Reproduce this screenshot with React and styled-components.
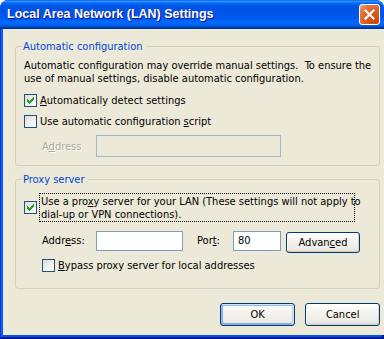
import React from "react";
import styled, { createGlobalStyle } from "styled-components";

const GlobalStyle = createGlobalStyle`
  html, body { margin: 0; padding: 0; background: #ffffff; }
  body {
    font-family: "DejaVu Sans Condensed", "Liberation Sans", sans-serif;
    font-size: 11px;
    color: #000;
  }
  * { box-sizing: border-box; }
`;

const Window = styled.div`
  width: 384px;
  height: 339px;
  display: flex;
  flex-direction: column;
  background: #0831d9;
  border-radius: 8px 8px 0 0;
  overflow: hidden;
`;

const TitleBar = styled.div`
  height: 29px;
  flex: none;
  display: flex;
  align-items: center;
  padding: 0 4px 1px 7px;
  border-radius: 8px 8px 0 0;
  background: linear-gradient(
    to bottom,
    #0058ee 0%,
    #3593ff 4%,
    #288eff 6%,
    #127dff 8%,
    #036ffc 10%,
    #0262ee 14%,
    #0057e5 20%,
    #0054e3 24%,
    #0055eb 56%,
    #005bf5 66%,
    #026afe 76%,
    #0062ef 86%,
    #0052d6 92%,
    #0040ab 94%,
    #003092 100%
  );
`;

const Title = styled.div`
  flex: 1;
  color: #fff;
  font-family: "Liberation Sans", sans-serif;
  font-weight: bold;
  font-size: 12.5px;
  text-shadow: 1px 1px #0f1089;
`;

const CloseButton = styled.div`
  width: 21px;
  height: 21px;
  border: 1px solid #fff;
  border-radius: 3px;
  display: flex;
  align-items: center;
  justify-content: center;
  background: radial-gradient(
    circle at 85% 85%,
    #cc4600 0%,
    #dc6527 55%,
    #e0764a 75%,
    #f4a98a 100%
  );
`;

const Frame = styled.div`
  flex: 1;
  display: flex;
  padding: 0 4px 4px 3px;
  background: #0055ea;
  box-shadow: inset 1px 0 #0831d9, inset -1px 0 #00138c, inset 0 -1px #00138c,
    inset -2px -2px #001ea0, inset 2px 0 #166aee;
`;

const Body = styled.div`
  flex: 1;
  background: #ece9d8;
  padding: 17px 9px 9px 12px;
  display: flex;
  flex-direction: column;
`;

const Group = styled.div`
  position: relative;
  border: 1px solid #d0d0bf;
  border-radius: 3px;
  display: flex;
  flex-direction: column;
  align-items: flex-start;
  padding: ${(p) => p.$pad};
  margin-top: ${(p) => p.$mt || 0}px;
`;

const Legend = styled.span`
  position: absolute;
  top: -7px;
  left: 6px;
  padding: 0 3px 0 1px;
  line-height: 13px;
  background: #ece9d8;
  color: #0046d5;
`;

const Para = styled.p`
  margin: 0 0 9px 0;
  line-height: 13px;
  white-space: pre;
`;

const CheckRow = styled.div`
  display: flex;
  align-items: center;
  gap: ${(p) => p.$gap ?? 3}px;
  line-height: 13px;
  margin-top: ${(p) => p.$mt || 0}px;
  padding-left: ${(p) => p.$indent || 0}px;
`;

const Box = styled.span`
  width: 13px;
  height: 13px;
  flex: none;
  border: 1px solid #1c5180;
  background: linear-gradient(135deg, #dcdcd7 0%, #f6f6f3 70%, #ffffff 100%);
  display: flex;
  align-items: center;
  justify-content: center;
`;

const U = styled.span`
  text-decoration: underline;
  text-underline-offset: 1px;
`;

const FieldRow = styled.div`
  display: flex;
  align-items: ${(p) => p.$align || "center"};
  padding-left: 18px;
  margin-top: ${(p) => p.$mt || 0}px;
`;

const FieldLabel = styled.span`
  width: ${(p) => p.$w}px;
  flex: none;
  line-height: ${(p) => p.$lh || 13}px;
  margin-left: ${(p) => p.$ml || 0}px;
  color: ${(p) => (p.$disabled ? "#aca899" : "#000")};
  text-shadow: ${(p) => (p.$disabled ? "1px 1px #ffffff" : "none")};
`;

const Input = styled.div`
  width: ${(p) => p.$w}px;
  height: ${(p) => p.$h}px;
  flex: none;
  border: 1px solid ${(p) => (p.$disabled ? "#a5b7c8" : "#7f9db9")};
  background: ${(p) => (p.$disabled ? "#ece9d8" : "#ffffff")};
  padding: 0 0 0 4px;
  line-height: ${(p) => p.$h - 2}px;
`;

const FocusLabel = styled.span`
  width: 316px;
  flex: none;
  border: 1px dotted #000;
  padding: 1px 1px 0 1px;
  line-height: 13px;
  white-space: pre;
`;

const Button = styled.div`
  width: ${(p) => p.$w || 75}px;
  height: ${(p) => p.$h || 23}px;
  flex: none;
  margin-left: ${(p) => p.$ml || 0}px;
  margin-top: ${(p) => p.$mt || 0}px;
  border: 1px solid #003c74;
  border-radius: 3px;
  display: flex;
  align-items: center;
  justify-content: center;
  background: linear-gradient(180deg, #ffffff 0%, #f4f3ee 40%, #ecebe6 86%, #d6d0c5 100%);
  box-shadow: ${(p) =>
    p.$default
      ? "inset -1px 1px #cee7ff, inset 1px 2px #98b8ea, inset -2px 2px #bcd4f6, inset 1px -1px #89ade4, inset 2px -2px #89ade4"
      : "inset -1px -1px #d6d0c5, inset 1px 1px #ffffff"};
`;

const Footer = styled.div`
  display: flex;
  justify-content: flex-end;
  gap: 10px;
  margin-top: 14px;
`;

const Check = () => (
  <svg width="7" height="7" viewBox="0 0 7 7" shapeRendering="crispEdges">
    <path
      fill="#21a121"
      d="M6 0h1v1h-1zM5 1h2v1h-2zM0 2h1v1h-1zM4 2h3v1h-3zM0 3h2v1h-2zM3 3h3v1h-3zM0 4h5v1h-5zM1 5h3v1h-3zM2 6h1v1h-1z"
    />
  </svg>
);

const Checkbox = ({ checked }) => <Box>{checked && <Check />}</Box>;

const CloseIcon = () => (
  <svg width="11" height="11" viewBox="0 0 11 11">
    <path d="M1.5 1.5 L9.5 9.5 M9.5 1.5 L1.5 9.5" stroke="#fff" strokeWidth="2.2" strokeLinecap="square" />
  </svg>
);

export default function App() {
  return (
    <>
      <GlobalStyle />
      <Window>
        <TitleBar>
          <Title>Local Area Network (LAN) Settings</Title>
          <CloseButton>
            <CloseIcon />
          </CloseButton>
        </TitleBar>
        <Frame>
          <Body>
            <Group $pad="12px 8px 8px 8px">
              <Legend>Automatic configuration</Legend>
              <Para>
                {"Automatic configuration may override manual settings.  To ensure the\nuse of manual settings, disable automatic configuration."}
              </Para>
              <CheckRow>
                <Checkbox checked />
                <span>
                  <U>A</U>utomatically detect settings
                </span>
              </CheckRow>
              <CheckRow $mt={8}>
                <Checkbox />
                <span>
                  Use automatic configuration <U>s</U>cript
                </span>
              </CheckRow>
              <FieldRow $mt={7}>
                <FieldLabel $w={54} $disabled>
                  A<U>d</U>dress
                </FieldLabel>
                <Input $w={185} $h={22} $disabled />
              </FieldRow>
            </Group>
            <Group $pad="13px 8px 16px 8px" $mt={13}>
              <Legend>Proxy server</Legend>
              <CheckRow $gap={2}>
                <Checkbox checked />
                <FocusLabel>
                  Use a pro<U>x</U>y server for your LAN (These settings will not apply to
                  {"\n"}dial-up or VPN connections).
                </FocusLabel>
              </CheckRow>
              <FieldRow $mt={9} $align="flex-start">
                <FieldLabel $w={54} $lh={20}>
                  Addr<U>e</U>ss:
                </FieldLabel>
                <Input $w={87} $h={20} />
                <FieldLabel $w={36} $lh={20} $ml={14}>
                  Por<U>t</U>:
                </FieldLabel>
                <Input $w={48} $h={20}>80</Input>
                <Button $w={74} $h={21} $ml={5} $mt={1}>
                  <span>
                    Advan<U>c</U>ed
                  </span>
                </Button>
              </FieldRow>
              <CheckRow $mt={6} $indent={18}>
                <Checkbox />
                <span>
                  <U>B</U>ypass proxy server for local addresses
                </span>
              </CheckRow>
            </Group>
            <Footer>
              <Button $default>OK</Button>
              <Button>Cancel</Button>
            </Footer>
          </Body>
        </Frame>
      </Window>
    </>
  );
}
